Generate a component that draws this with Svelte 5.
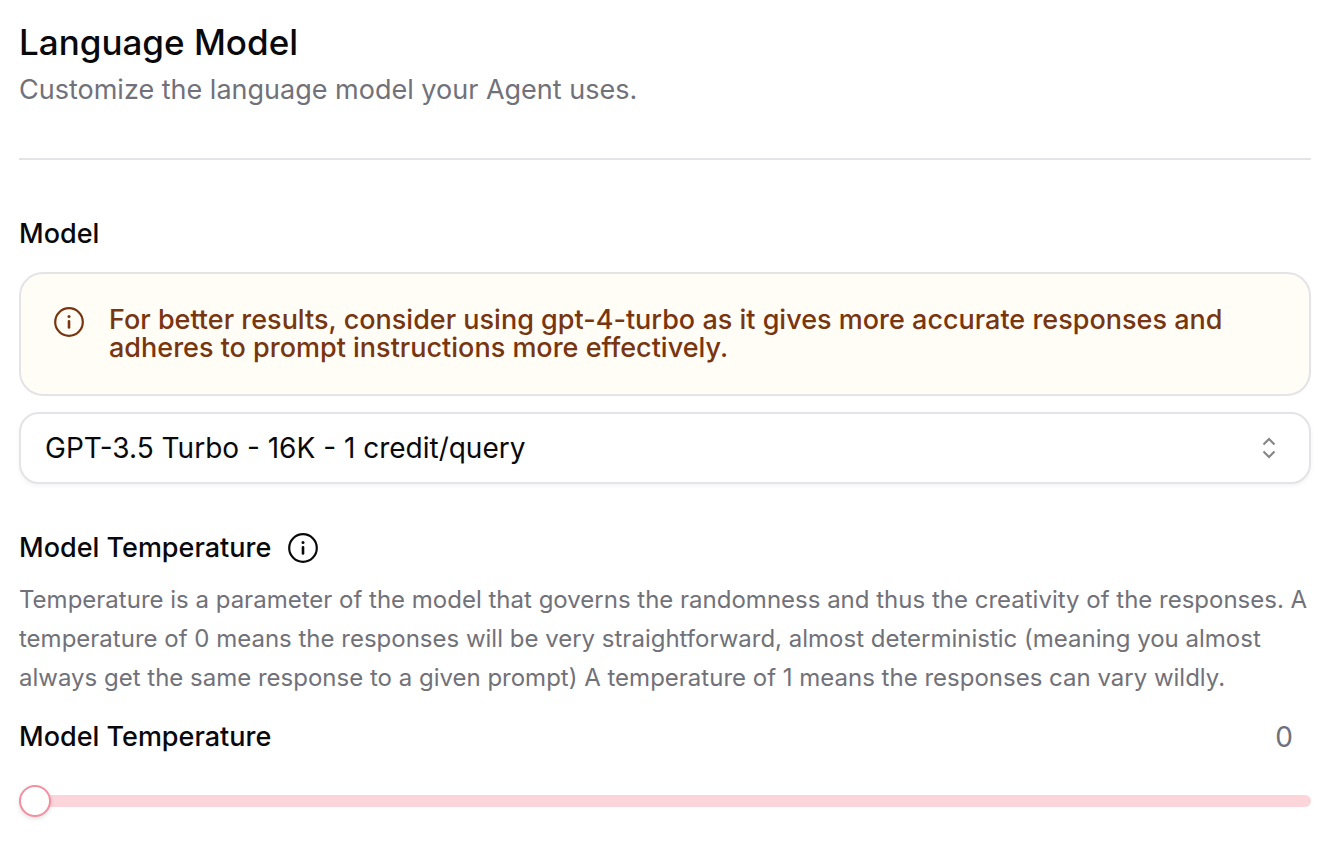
<script>
  const models = ['GPT-3.5 Turbo - 16K - 1 credit/query', 'GPT-4 Turbo - 20 credits/query'];
  let model = $state(models[0]);
  let temperature = $state(0);
</script>

{#snippet info()}
  <svg class="info" viewBox="0 0 32 32" aria-hidden="true">
    <circle cx="16" cy="16" r="13.8" fill="none" stroke="currentColor" stroke-width="2.2" />
    <circle cx="16" cy="10.5" r="1.5" fill="currentColor" />
    <path d="M16 15.4V21.4" fill="none" stroke="currentColor" stroke-width="2.6" stroke-linecap="round" />
  </svg>
{/snippet}

<main>
  <header>
    <h1>Language Model</h1>
    <p>Customize the language model your Agent uses.</p>
  </header>
  <section>
    <label class="label" for="model">Model</label>
    <div class="alert">
      {@render info()}
      <p>For better results, consider using gpt-4-turbo as it gives more accurate responses and adheres to prompt instructions more effectively.</p>
    </div>
    <div class="picker">
      <select id="model" bind:value={model}>
        {#each models as name}<option>{name}</option>{/each}
      </select>
      <svg class="chevrons" viewBox="0 0 16 24" aria-hidden="true">
        <path d="M2.5 8.5L8 3l5.5 5.5M2.5 15.5L8 21l5.5-5.5" fill="none" stroke="currentColor" stroke-width="2" />
      </svg>
    </div>
  </section>
  <section class="temperature">
    <h2 class="label">Model Temperature {@render info()}</h2>
    <p>Temperature is a parameter of the model that governs the randomness and thus the creativity of the responses. A temperature of 0 means the responses will be very straightforward, almost deterministic (meaning you almost always get the same response to a given prompt) A temperature of 1 means the responses can vary wildly.</p>
    <div class="row">
      <label class="label" for="temp">Model Temperature</label>
      <output for="temp">{temperature}</output>
    </div>
    <input id="temp" type="range" min="0" max="1" step="0.1" bind:value={temperature} />
  </section>
</main>

<style>
  :global(body) { margin: 0; background: #fff; }
  main { padding: 20px 25px 40px 19px; font-family: Inter, sans-serif; color: #09090b; }
  h1, h2, p { margin: 0; }
  header { padding-bottom: 48px; border-bottom: 2px solid #e4e4e7; }
  h1 { font-size: 35px; line-height: 44px; font-weight: 500; }
  header p { margin-top: 6px; font-size: 27px; line-height: 40px; color: #71717a; }
  .label { display: block; font-size: 27px; line-height: 28px; font-weight: 500; }
  section { padding-top: 60px; }
  .info { width: 32px; height: 32px; flex: none; }
  .alert { display: flex; gap: 24px; margin-top: 24px; padding: 32px; border: 2px solid #e4e4e7; border-radius: 24px; background: #fffdf5; color: #78350f; }
  .alert p { max-width: 1140px; font-size: 27px; line-height: 28px; font-weight: 500; }
  .picker { display: grid; margin-top: 16px; align-items: center; }
  .picker > * { grid-area: 1 / 1; }
  select { appearance: none; width: 100%; height: 72px; padding: 0 24px; border: 2px solid #e4e4e7; border-radius: 20px; background: #fff; box-shadow: 0 2px 4px rgb(0 0 0 / 5%); color: #09090b; font: 400 28px/40px Inter, sans-serif; }
  .chevrons { justify-self: end; width: 16px; height: 24px; margin-right: 34px; color: #848484; pointer-events: none; }
  .temperature { padding-top: 48px; }
  h2.label { display: flex; align-items: center; gap: 16px; line-height: 30px; }
  .temperature p { margin-top: 16px; font-size: 24px; line-height: 39px; color: #71717a; }
  .row { display: flex; justify-content: space-between; align-items: center; margin-top: 20px; }
  output { padding-right: 18px; font-size: 28px; line-height: 40px; color: #71717a; }
  input { appearance: none; display: block; width: 100%; height: 32px; margin: 28px 0 0; background: transparent; }
  input::-webkit-slider-runnable-track { height: 12px; border-radius: 6px; background: #fbd5d9; }
  input::-webkit-slider-thumb { appearance: none; box-sizing: border-box; width: 32px; height: 32px; margin-top: -10px; border: 2px solid #f48fa0; border-radius: 50%; background: #fff; box-shadow: 0 2px 4px rgb(0 0 0 / 12%); }
</style>
